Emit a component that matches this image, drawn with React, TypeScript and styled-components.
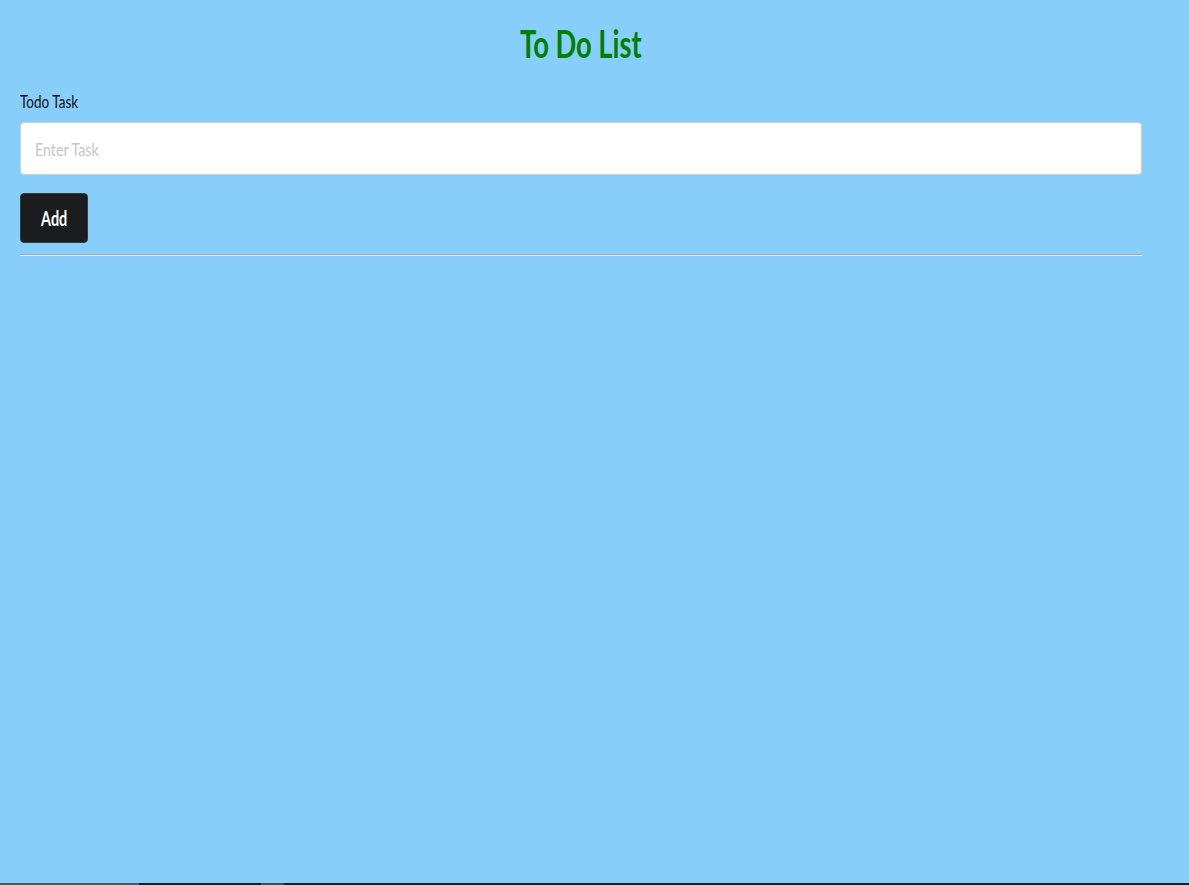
import React from "react";
import styled, { createGlobalStyle } from "styled-components";

const Global = createGlobalStyle`
  html, body { margin: 0; padding: 0; }
  body {
    background: #87cefa;
    font-family: Lato, "Noto Sans", sans-serif;
    color: #111;
  }
`;

const Page = styled.div`
  min-height: 885px;
  display: flex;
  flex-direction: column;
  box-sizing: border-box;
`;

const Main = styled.main`
  flex: 1;
  padding: 20px 47px 0 20px;
  display: flex;
  flex-direction: column;
`;

const Squeeze = styled.span<{ $origin?: string; $s?: number }>`
  display: inline-block;
  transform: scaleX(${(p) => p.$s ?? 0.72});
  transform-origin: ${(p) => p.$origin || "left center"};
  white-space: nowrap;
`;

const Title = styled.h1`
  margin: 0;
  text-align: center;
  font-size: 39px;
  line-height: 1.2;
  font-weight: 700;
  color: #008000;
`;

const Label = styled.label`
  margin-top: 24px;
  font-size: 18px;
  line-height: 1.2;
  color: #111;
  display: block;
`;

const InputBox = styled.div`
  margin-top: 10px;
  height: 53px;
  box-sizing: border-box;
  background: #fff;
  border: 1px solid #cfcfcf;
  border-radius: 4px;
  display: flex;
  align-items: center;
  padding-left: 14px;
  position: relative;
`;

const Input = styled.input`
  position: absolute;
  inset: 0;
  border: none;
  background: transparent;
  outline: none;
  opacity: 0;
`;

const Placeholder = styled.span`
  font-size: 18px;
  color: #c6c6c6;
  pointer-events: none;
`;

const Button = styled.button`
  margin-top: 18px;
  width: 68px;
  height: 50px;
  background: #1b1c1e;
  border: 1px solid #3a3b3d;
  border-radius: 4px;
  color: #fff;
  font-family: Lato, "Noto Sans", sans-serif;
  font-weight: 700;
  font-size: 20px;
  padding: 0;
  display: flex;
  align-items: center;
  justify-content: center;
  cursor: pointer;
`;

const Rule = styled.hr`
  margin: 11px 0 0;
  height: 0;
  border: none;
  border-top: 1px solid #a8a8a8;
  border-bottom: 1px solid #e4e4e4;
`;

const Strip = styled.div`
  height: 2px;
  display: flex;
`;

const Seg = styled.div<{ $w: string; $c: string }>`
  width: ${(p) => p.$w};
  flex: ${(p) => (p.$w === "auto" ? 1 : "none")};
  background: ${(p) => p.$c};
`;

export default function App() {
  return (
    <Page>
      <Global />
      <Main>
        <Title>
          <Squeeze $origin="center center" $s={0.7}>
            To Do List
          </Squeeze>
        </Title>
        <Label htmlFor="task">
          <Squeeze $s={0.75}>Todo Task</Squeeze>
        </Label>
        <InputBox>
          <Placeholder>
            <Squeeze $s={0.79}>Enter Task</Squeeze>
          </Placeholder>
          <Input id="task" aria-label="Enter Task" />
        </InputBox>
        <div>
          <Button>
            <Squeeze $origin="center center">Add</Squeeze>
          </Button>
        </div>
        <Rule />
      </Main>
      <Strip>
        <Seg $w="139px" $c="#555555" />
        <Seg $w="122px" $c="#1e1e1e" />
        <Seg $w="22px" $c="#4a4a4a" />
        <Seg $w="2px" $c="#333" />
        <Seg $w="auto" $c="#1e1e1e" />
      </Strip>
    </Page>
  );
}
